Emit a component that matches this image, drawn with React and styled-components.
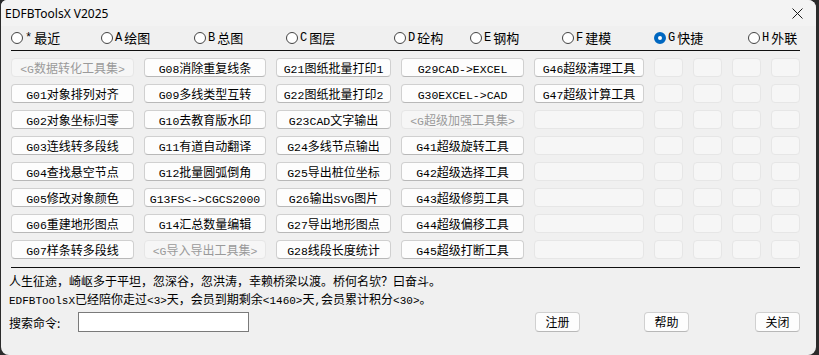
import React, { useState } from "react";
import styled, { createGlobalStyle } from "styled-components";

const GlobalStyle = createGlobalStyle`
  html, body { margin: 0; padding: 0; background: #2b2b2b; }
  body { font-family: "Liberation Sans", "Noto Sans CJK SC", sans-serif; }
`;

const Window = styled.div`
  width: 815px;
  height: 355px;
  margin-left: 1px;
  background: #f0f0f0;
  border-radius: 6px 8px 8px 8px;
  overflow: hidden;
  display: flex;
  flex-direction: column;
  color: #000;
`;

const TitleBar = styled.div`
  height: 26px;
  display: flex;
  align-items: center;
  justify-content: space-between;
  padding: 0 13px 0 4px;
  background: #f3f3f3;
  font-family: "Noto Sans", "Open Sans", sans-serif;
  font-size: 12px;
`;

const RadioRow = styled.div`
  height: 24px;
  display: flex;
  align-items: center;
  padding-left: 10px;
`;

const RadioItem = styled.label`
  width: ${(p) => p.$w}px;
  display: flex;
  align-items: center;
  gap: 2px;
  font-family: "Noto Sans CJK SC", sans-serif;
  font-size: 13px;
  line-height: 14px;
  cursor: pointer;
`;

const Dot = styled.span`
  width: 12px;
  height: 12px;
  box-sizing: border-box;
  border-radius: 50%;
  border: ${(p) => (p.$on ? "4px solid #0067c0" : "1px solid #444")};
  background: #fff;
  flex-shrink: 0;
`;

const Rule = styled.div`
  height: 1px;
  background: #101010;
  margin: ${(p) => p.$m};
`;

const Grid = styled.div`
  display: grid;
  grid-template-columns: 123px 122px 115px 123px 110px 29px 29px 29px 29px;
  grid-auto-rows: 19px;
  column-gap: 10px;
  row-gap: 7px;
  padding: 7px 0 0 10px;
`;

const ToolButton = styled.button`
  margin: 0;
  padding: 0;
  box-sizing: border-box;
  height: 19px;
  border-radius: 4px;
  border: 1px solid ${(p) => (p.$off ? "#e6e6e6" : "#d0d0d0")};
  border-bottom-color: ${(p) => (p.$off ? "#e6e6e6" : "#b8b8b8")};
  background: ${(p) => (p.$off ? "#f6f6f6" : "#fdfdfd")};
  color: ${(p) => (p.$off ? "#9a9a9a" : "#000")};
  font-family: "Noto Sans CJK SC", sans-serif;
  font-size: 12px;
  line-height: 17px;
  white-space: nowrap;
  overflow: hidden;
  text-align: center;
`;

const Footer = styled.div`
  padding: 4px 0 0 8px;
  display: flex;
  flex-direction: column;
`;

const Line = styled.div`
  height: 18px;
  line-height: 18px;
  font-size: 12px;
  font-family: "Noto Sans CJK SC", sans-serif;
  white-space: nowrap;
`;

// SimSun-like half width latin
const Latin = styled.span`
  font-family: "Liberation Mono", monospace;
  font-size: ${(p) => p.$size || 11.5}px;
`;

const SearchRow = styled.div`
  display: flex;
  align-items: center;
  height: 20px;
  margin-top: 4px;
`;

const Label = styled.span`
  width: 69px;
  font-family: "Noto Sans CJK SC", sans-serif;
  font-size: 12px;
`;

const SearchInput = styled.input`
  width: 171px;
  height: 20px;
  box-sizing: border-box;
  border: 1px solid #7a7a7a;
  background: #fff;
  margin: 0;
  padding: 0 3px;
  outline: none;
`;

const ActionButton = styled.button`
  width: 45px;
  height: 20px;
  box-sizing: border-box;
  margin-left: ${(p) => p.$ml}px;
  padding: 0;
  border: 1px solid #d0d0d0;
  border-bottom-color: #b8b8b8;
  border-radius: 4px;
  background: #fdfdfd;
  font-family: "Noto Sans CJK SC", sans-serif;
  font-size: 12px;
  line-height: 18px;
`;

const radios = [
  { label: "*最近", w: 90 },
  { label: "A绘图", w: 93 },
  { label: "B总图", w: 92 },
  { label: "C图层", w: 108 },
  { label: "D砼构", w: 76 },
  { label: "E钢构", w: 92 },
  { label: "F建模", w: 92 },
  { label: "G快捷", w: 94 },
  { label: "H外联", w: 60 },
];

const columns = [
  ["<G数据转化工具集>", "G01对象排列对齐", "G02对象坐标归零", "G03连线转多段线", "G04查找悬空节点", "G05修改对象颜色", "G06重建地形图点", "G07样条转多段线"],
  ["G08消除重复线条", "G09多线类型互转", "G10去教育版水印", "G11有道自动翻译", "G12批量圆弧倒角", "G13FS<->CGCS2000", "G14汇总数量编辑", "<G导入导出工具集>"],
  ["G21图纸批量打印1", "G22图纸批量打印2", "G23CAD文字输出", "G24多线节点输出", "G25导出桩位坐标", "G26输出SVG图片", "G27导出地形图点", "G28线段长度统计"],
  ["G29CAD->EXCEL", "G30EXCEL->CAD", "<G超级加强工具集>", "G41超级旋转工具", "G42超级选择工具", "G43超级修剪工具", "G44超级偏移工具", "G45超级打断工具"],
  ["G46超级清理工具", "G47超级计算工具", "", "", "", "", "", ""],
  ["", "", "", "", "", "", "", ""],
  ["", "", "", "", "", "", "", ""],
  ["", "", "", "", "", "", "", ""],
  ["", "", "", "", "", "", "", ""],
];

const cells = [];
for (let r = 0; r < 8; r++) {
  for (let c = 0; c < 9; c++) {
    const text = columns[c][r];
    cells.push({ key: `${r}-${c}`, text, off: !text || text.startsWith("<") });
  }
}

// wrap ascii runs so they get the narrow latin face
const mixed = (text, size) =>
  text.split(/([\x20-\x7e]+)/).map((part, i) =>
    /^[\x20-\x7e]+$/.test(part) ? (
      <Latin key={i} $size={size}>
        {part}
      </Latin>
    ) : (
      part
    )
  );

const CloseIcon = () => (
  <svg width="11" height="11" viewBox="0 0 11 11">
    <path d="M0.5 0.5 L10.5 10.5 M10.5 0.5 L0.5 10.5" stroke="#1a1a1a" strokeWidth="1" />
  </svg>
);

export default function App() {
  const [tab, setTab] = useState(7);

  return (
    <>
      <GlobalStyle />
      <Window>
        <TitleBar>
          <span>EDFBToolsX V2025</span>
          <CloseIcon />
        </TitleBar>

        <RadioRow>
          {radios.map((r, i) => (
            <RadioItem key={r.label} $w={r.w} onClick={() => setTab(i)}>
              <Dot $on={tab === i} />
              {mixed(r.label, 12)}
            </RadioItem>
          ))}
        </RadioRow>
        <Rule $m="0 16px 0 10px" />

        <Grid>
          {cells.map((cell) => (
            <ToolButton key={cell.key} $off={cell.off}>
              {mixed(cell.text)}
            </ToolButton>
          ))}
        </Grid>

        <Rule $m="8px 16px 0 10px" />

        <Footer>
          <Line>人生征途，崎岖多于平坦，忽深谷，忽洪涛，幸赖桥梁以渡。桥何名欤？曰奋斗。</Line>
          <Line>
            {mixed("EDFBToolsX已经陪你走过<3>天，会员到期剩余<1460>天,会员累计积分<30>。", 11)}
          </Line>
          <SearchRow>
            <Label>搜索命令:</Label>
            <SearchInput />
            <ActionButton $ml={286}>注册</ActionButton>
            <ActionButton $ml={64}>帮助</ActionButton>
            <ActionButton $ml={66}>关闭</ActionButton>
          </SearchRow>
        </Footer>
      </Window>
    </>
  );
}
